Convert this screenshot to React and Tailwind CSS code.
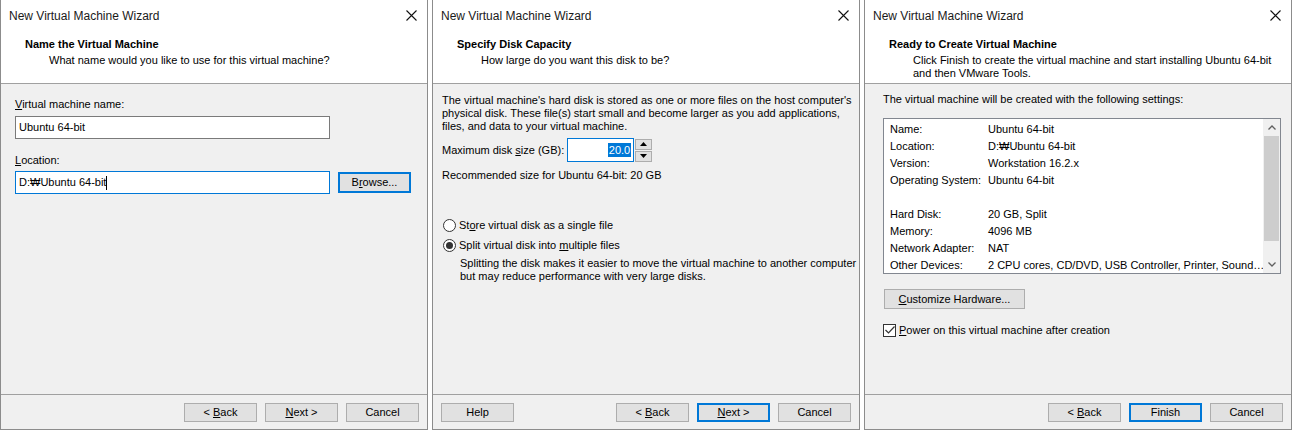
import React from "react";

const font = "font-['Liberation_Sans','Noto_Sans_CJK_KR',sans-serif]";

function Btn({ children, primary, className = "" }) {
  return (
    <div
      className={`flex items-center justify-center bg-[#e1e1e1] text-[11px] text-black ${
        primary ? "border-2 border-[#0078d7]" : "border border-[#adadad]"
      } ${className}`}
    >
      <span className="whitespace-pre">{children}</span>
    </div>
  );
}

function CloseX() {
  return (
    <svg width="11" height="11" viewBox="0 0 11 11" className="shrink-0">
      <path d="M0.5 0.5 L10.5 10.5 M10.5 0.5 L0.5 10.5" stroke="#111" strokeWidth="1.1" fill="none" />
    </svg>
  );
}

function Panel({ title, sub, children, footer }) {
  return (
    <div className="w-[428px] h-[430px] shrink-0 flex flex-col border-x border-b border-[#8c8c8c] bg-white">
      <div className="h-[31px] flex items-center justify-between pl-[8px] pr-[10px]">
        <span className="text-[12px] text-[#1a1a1a]">New Virtual Machine Wizard</span>
        <CloseX />
      </div>
      <div className="h-[53px] border-b border-[#a0a0a0] pt-[5px] pl-[24px] text-[11px] text-black">
        <div className="font-bold leading-[16px]">{title}</div>
        <div className="pl-[24px] mt-[2px] leading-[13px]">{sub}</div>
      </div>
      <div className="flex-1 bg-[#f0f0f0] text-[11px] text-black">{children}</div>
      <div className="h-[35px] border-t border-[#a0a0a0] bg-[#f0f0f0] pt-[8px] px-[8px] flex">{footer}</div>
    </div>
  );
}

function Radio({ on }) {
  return (
    <div className="w-[13px] h-[13px] rounded-full border border-[#333] bg-white flex items-center justify-center shrink-0">
      {on && <div className="w-[7px] h-[7px] rounded-full bg-[#333]" />}
    </div>
  );
}

const settings = [
  ["Name:", "Ubuntu 64-bit"],
  ["Location:", "D:₩Ubuntu 64-bit"],
  ["Version:", "Workstation 16.2.x"],
  ["Operating System:", "Ubuntu 64-bit"],
  ["", ""],
  ["Hard Disk:", "20 GB, Split"],
  ["Memory:", "4096 MB"],
  ["Network Adapter:", "NAT"],
  ["Other Devices:", "2 CPU cores, CD/DVD, USB Controller, Printer, Sound…"],
];

export default function App() {
  return (
    <div className={`w-[1293px] h-[430px] bg-white flex gap-[4px] overflow-hidden ${font}`}>
      {/* step 1 */}
      <Panel
        title="Name the Virtual Machine"
        sub="What name would you like to use for this virtual machine?"
        footer={
          <div className="ml-auto flex gap-[8px]">
            <Btn className="w-[73px] h-[19px]">&lt; <u>B</u>ack</Btn>
            <Btn className="w-[73px] h-[19px]"><u>N</u>ext &gt;</Btn>
            <Btn className="w-[73px] h-[19px]">Cancel</Btn>
          </div>
        }
      >
        <div className="pt-[12px] pl-[14px]">
          <div className="leading-[16px]"><u>V</u>irtual machine name:</div>
          <div className="mt-[4px] w-[315px] h-[23px] border border-[#7a7a7a] bg-white flex items-center pl-[3px]">
            Ubuntu 64-bit
          </div>
          <div className="mt-[13px] leading-[16px]"><u>L</u>ocation:</div>
          <div className="mt-[3px] flex items-center gap-[8px]">
            <div className="w-[315px] h-[23px] border border-[#0078d7] bg-white flex items-center pl-[3px]">
              <span>D:₩Ubuntu 64-bit</span>
              <span className="w-[1px] h-[14px] bg-black" />
            </div>
            <Btn primary className="w-[73px] h-[21px]">B<u>r</u>owse...</Btn>
          </div>
        </div>
      </Panel>

      {/* step 2 */}
      <Panel
        title="Specify Disk Capacity"
        sub="How large do you want this disk to be?"
        footer={
          <div className="flex w-full">
            <Btn className="w-[73px] h-[19px]">Help</Btn>
            <div className="ml-auto flex gap-[8px]">
              <Btn className="w-[73px] h-[19px]">&lt; <u>B</u>ack</Btn>
              <Btn primary className="w-[73px] h-[19px]"><u>N</u>ext &gt;</Btn>
              <Btn className="w-[73px] h-[19px]">Cancel</Btn>
            </div>
          </div>
        }
      >
        <div className="pt-[10px] pl-[9px]">
          <div className="leading-[13px] whitespace-nowrap">
            The virtual machine's hard disk is stored as one or more files on the host computer's
            <br />
            physical disk. These file(s) start small and become larger as you add applications,
            <br />
            files, and data to your virtual machine.
          </div>
          <div className="mt-[5px] flex items-center h-[24px] gap-[3px]">
            <div className="whitespace-nowrap shrink-0">Maximum disk <u>s</u>ize (GB):</div>
            <div className="flex items-center">
              <div className="w-[67px] h-[24px] border border-[#0078d7] bg-white flex items-center justify-end pr-[2px]">
                <span className="bg-[#0078d7] text-white leading-[14px] px-[1px]">20.0</span>
              </div>
              <div className="flex flex-col gap-[1px] ml-[1px]">
                <div className="w-[17px] h-[11px] border border-[#adadad] bg-[#e1e1e1] flex items-center justify-center">
                  <svg width="7" height="4" viewBox="0 0 7 4"><path d="M0 4 L3.5 0 L7 4 Z" fill="#000" /></svg>
                </div>
                <div className="w-[17px] h-[11px] border border-[#adadad] bg-[#e1e1e1] flex items-center justify-center">
                  <svg width="7" height="4" viewBox="0 0 7 4"><path d="M0 0 L3.5 4 L7 0 Z" fill="#000" /></svg>
                </div>
              </div>
            </div>
          </div>
          <div className="mt-[5px] leading-[16px]">Recommended size for Ubuntu 64-bit: 20 GB</div>
          <div className="mt-[34px] flex items-center gap-[3px] h-[16px] pl-[1px]">
            <Radio />
            <span>St<u>o</u>re virtual disk as a single file</span>
          </div>
          <div className="mt-[4px] flex items-center gap-[3px] h-[16px] pl-[1px]">
            <Radio on />
            <span>Split virtual disk into <u>m</u>ultiple files</span>
          </div>
          <div className="mt-[4px] pl-[18px] leading-[13px] whitespace-nowrap">
            Splitting the disk makes it easier to move the virtual machine to another computer
            <br />
            but may reduce performance with very large disks.
          </div>
        </div>
      </Panel>

      {/* step 3 */}
      <Panel
        title="Ready to Create Virtual Machine"
        sub={
          <>
            Click Finish to create the virtual machine and start installing Ubuntu 64-bit
            <br />
            and then VMware Tools.
          </>
        }
        footer={
          <div className="ml-auto flex gap-[8px]">
            <Btn className="w-[73px] h-[19px]">&lt; <u>B</u>ack</Btn>
            <Btn primary className="w-[73px] h-[19px]">Finish</Btn>
            <Btn className="w-[73px] h-[19px]">Cancel</Btn>
          </div>
        }
      >
        <div className="pt-[7px] pl-[18px]">
          <div className="leading-[16px]">The virtual machine will be created with the following settings:</div>
          <div className="mt-[11px] w-[398px] h-[156px] border border-[#828790] bg-white flex overflow-hidden">
            <div className="flex-1 pt-[2px] pl-[6px] overflow-hidden">
              {settings.map(([k, v], i) => (
                <div key={i} className="h-[17px] flex items-center whitespace-nowrap">
                  <span className="w-[98px] shrink-0">{k}</span>
                  <span>{v}</span>
                </div>
              ))}
            </div>
            <div className="w-[17px] h-full bg-[#f0f0f0] flex flex-col items-center shrink-0">
              <div className="h-[17px] flex items-center justify-center">
                <svg width="8" height="5" viewBox="0 0 8 5"><path d="M0.5 4.5 L4 1 L7.5 4.5" stroke="#606060" strokeWidth="1.3" fill="none" /></svg>
              </div>
              <div className="w-[15px] h-[105px] bg-[#cdcdcd]" />
              <div className="flex-1" />
              <div className="h-[17px] flex items-center justify-center">
                <svg width="8" height="5" viewBox="0 0 8 5"><path d="M0.5 0.5 L4 4 L7.5 0.5" stroke="#606060" strokeWidth="1.3" fill="none" /></svg>
              </div>
            </div>
          </div>
          <Btn className="mt-[15px] ml-[1px] w-[141px] h-[20px]"><u>C</u>ustomize Hardware...</Btn>
          <div className="mt-[13px] flex items-center gap-[3px] h-[16px]">
            <div className="w-[13px] h-[13px] border border-[#333] bg-white flex items-center justify-center">
              <svg width="10" height="8" viewBox="0 0 10 8"><path d="M0.5 4 L3.5 7 L9.5 0.5" stroke="#333" strokeWidth="1.2" fill="none" /></svg>
            </div>
            <span><u>P</u>ower on this virtual machine after creation</span>
          </div>
        </div>
      </Panel>
    </div>
  );
}
